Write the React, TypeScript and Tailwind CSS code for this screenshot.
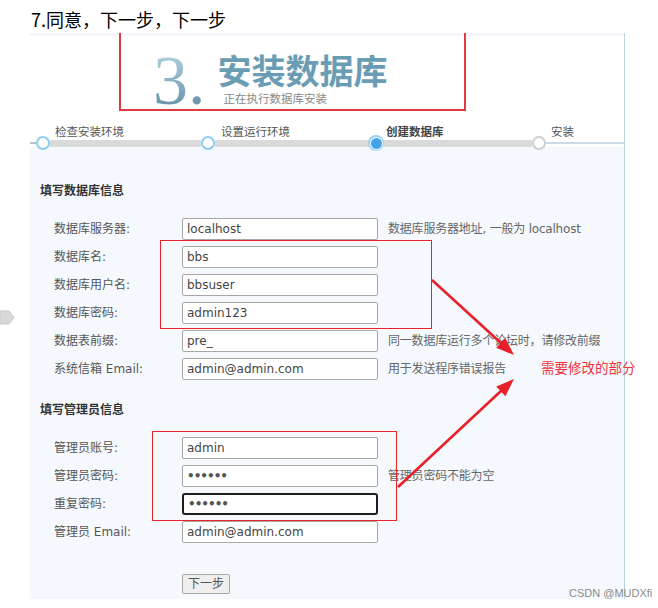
import React from "react";

const cjk = "font-['DejaVu_Sans','Noto_Sans_CJK_SC',sans-serif]";

interface RowProps {
  label: string;
  value: string;
  hint?: string;
  focused?: boolean;
  password?: boolean;
}

function Row({ label, value, hint, focused, password }: RowProps) {
  return (
    <div className="flex items-center h-[28px]">
      <div className="w-[152px] pl-[24px] text-[12px] text-[#555] whitespace-nowrap">{label}</div>
      <div
        className={`w-[196px] h-[22px] bg-white flex items-center pl-[4px] text-[12px] text-[#444] ${
          focused ? "border-2 border-[#1f1f1f] rounded-[3px] pl-[3px]" : "border border-[#a7a7a7] rounded-[2px]"
        }`}
      >
        {password ? <span className="text-[12px] font-bold tracking-[-1px] text-[#555]">{value}</span> : value}
      </div>
      {hint && <div className="ml-[10px] text-[12px] text-[#666] whitespace-nowrap tracking-[-0.2px]">{hint}</div>}
    </div>
  );
}

function Step({ state }: { state: "done" | "active" | "todo" }) {
  if (state === "active") {
    return (
      <div className="relative z-10 w-[16px] h-[16px] -mx-[1px] rounded-full bg-[#9dd2f5] flex items-center justify-center shrink-0">
        <div className="w-[11px] h-[11px] rounded-full bg-[#44a3e8] ring-1 ring-white" />
      </div>
    );
  }
  return (
    <div
      className={`relative z-10 w-[14px] h-[14px] rounded-full bg-white border-2 shrink-0 ${
        state === "done" ? "border-[#8ccbf2]" : "border-[#cdcdcd]"
      }`}
    />
  );
}

export default function App() {
  return (
    <div className={`relative w-[658px] h-[608px] bg-white overflow-hidden ${cjk}`}>
      {/* blog caption */}
      <div className="h-[33px] pl-[31px] pt-[8px] text-[18px] leading-[22px] text-black font-['Noto_Sans_CJK_SC',sans-serif]">
        7.同意，下一步，下一步
      </div>

      {/* installer screenshot */}
      <div className="ml-[30px] w-[595px] border-r border-[#b7d4e3]">
        <div className="h-[92px] bg-white border-t-[3px] border-[#f2f6fa] flex items-start pl-[123px] pt-[10px]">
          <div className="text-[70px] leading-[70px] font-['Liberation_Serif',serif] bg-gradient-to-b from-[#bcd9e5] to-[#5a8aa0] bg-clip-text text-transparent">
            3.
          </div>
          <div className="ml-[12px] mt-[6px] flex flex-col">
            <div className="text-[34px] leading-[36px] font-bold text-[#6a9db3] font-['Noto_Sans_CJK_SC',sans-serif]">
              安装数据库
            </div>
            <div className="ml-[6px] mt-[3px] text-[11.5px] leading-[14px] text-[#888] font-['Noto_Sans_CJK_SC',sans-serif]">
              正在执行数据库安装
            </div>
          </div>
        </div>

        {/* progress */}
        <div className="h-[14px] bg-white flex pl-[25px] text-[11.5px] leading-[12px] text-[#555] font-['Noto_Sans_CJK_SC',sans-serif]">
          <div className="w-[166px]">检查安装环境</div>
          <div className="w-[165px]">设置运行环境</div>
          <div className="w-[165px] font-bold text-[#444]">创建数据库</div>
          <div>安装</div>
        </div>
        <div className="h-[8px] bg-white flex items-center">
          <div className="w-[6px] h-[2px] bg-[#b9c4cc]" />
          <Step state="done" />
          <div className="w-[151px] h-[7px] bg-[#dadada]" />
          <Step state="done" />
          <div className="w-[154px] h-[7px] bg-[#dadada]" />
          <Step state="active" />
          <div className="w-[149px] h-[7px] bg-[#dadada]" />
          <Step state="todo" />
          <div className="flex-1 h-[2px] bg-[#c9dbe6]" />
        </div>

        {/* form */}
        <div className="bg-[#f5f9fd] pt-[34px] pb-[4px]">
          <div className="pl-[10px] text-[12px] leading-[20px] font-bold text-[#333]">填写数据库信息</div>
          <div className="mt-[14px]">
            <Row label="数据库服务器:" value="localhost" hint="数据库服务器地址, 一般为 localhost" />
            <Row label="数据库名:" value="bbs" />
            <Row label="数据库用户名:" value="bbsuser" />
            <Row label="数据库密码:" value="admin123" />
            <Row label="数据表前缀:" value="pre_" hint="同一数据库运行多个论坛时，请修改前缀" />
            <Row label="系统信箱 Email:" value="admin@admin.com" hint="用于发送程序错误报告" />
          </div>
          <div className="mt-[17px] pl-[10px] text-[12px] leading-[20px] font-bold text-[#333]">填写管理员信息</div>
          <div className="mt-[14px]">
            <Row label="管理员账号:" value="admin" />
            <Row label="管理员密码:" value="••••••" password hint="管理员密码不能为空" />
            <Row label="重复密码:" value="••••••" password focused />
            <Row label="管理员 Email:" value="admin@admin.com" />
          </div>
          <div className="mt-[25px] pl-[152px]">
            <button className="w-[48px] h-[20px] bg-[#efefef] border border-[#a9a9a9] rounded-[2px] text-[12px] text-[#555] leading-none">
              下一步
            </button>
          </div>
        </div>
      </div>

      {/* side tab */}
      <svg className="absolute left-0 top-[310px]" width="16" height="16" viewBox="0 0 16 16">
        <polygon points="0,1 9,1 14,7.5 9,14 0,14" fill="#d8d8d8" stroke="#c9c9c9" strokeWidth="1" />
      </svg>

      {/* annotations */}
      <div className="absolute left-[119px] top-[33px] w-[347px] h-[78px] border-2 border-t-0 border-[#e23a42] pointer-events-none" />
      <div className="absolute left-[160px] top-[240px] w-[272px] h-[89px] border-[1.5px] border-[#e8232b] pointer-events-none" />
      <div className="absolute left-[152px] top-[431px] w-[245px] h-[90px] border-[1.5px] border-[#e8232b] pointer-events-none" />
      <svg className="absolute left-0 top-0 pointer-events-none" width="658" height="608" viewBox="0 0 658 608">
        <line x1="432" y1="280" x2="502" y2="344" stroke="#e8202a" strokeWidth="2.6" />
        <polygon points="514,355 496.2,347.8 505.3,338.1" fill="#e8202a" />
        <line x1="398" y1="487" x2="502" y2="390" stroke="#e8202a" strokeWidth="2.6" />
        <polygon points="514,379 505.4,396.2 496.2,386.4" fill="#e8202a" />
      </svg>
      <div className="absolute left-[541px] top-[357px] text-[13.5px] leading-[20px] text-[#f0323c] font-['Noto_Sans_CJK_SC',sans-serif]">
        需要修改的部分
      </div>
      <div className="absolute left-[569px] top-[586px] text-[11px] leading-[14px] text-[#8a8a8a] font-['Liberation_Sans',sans-serif] whitespace-nowrap">
        CSDN @MUDXfi
      </div>
    </div>
  );
}
